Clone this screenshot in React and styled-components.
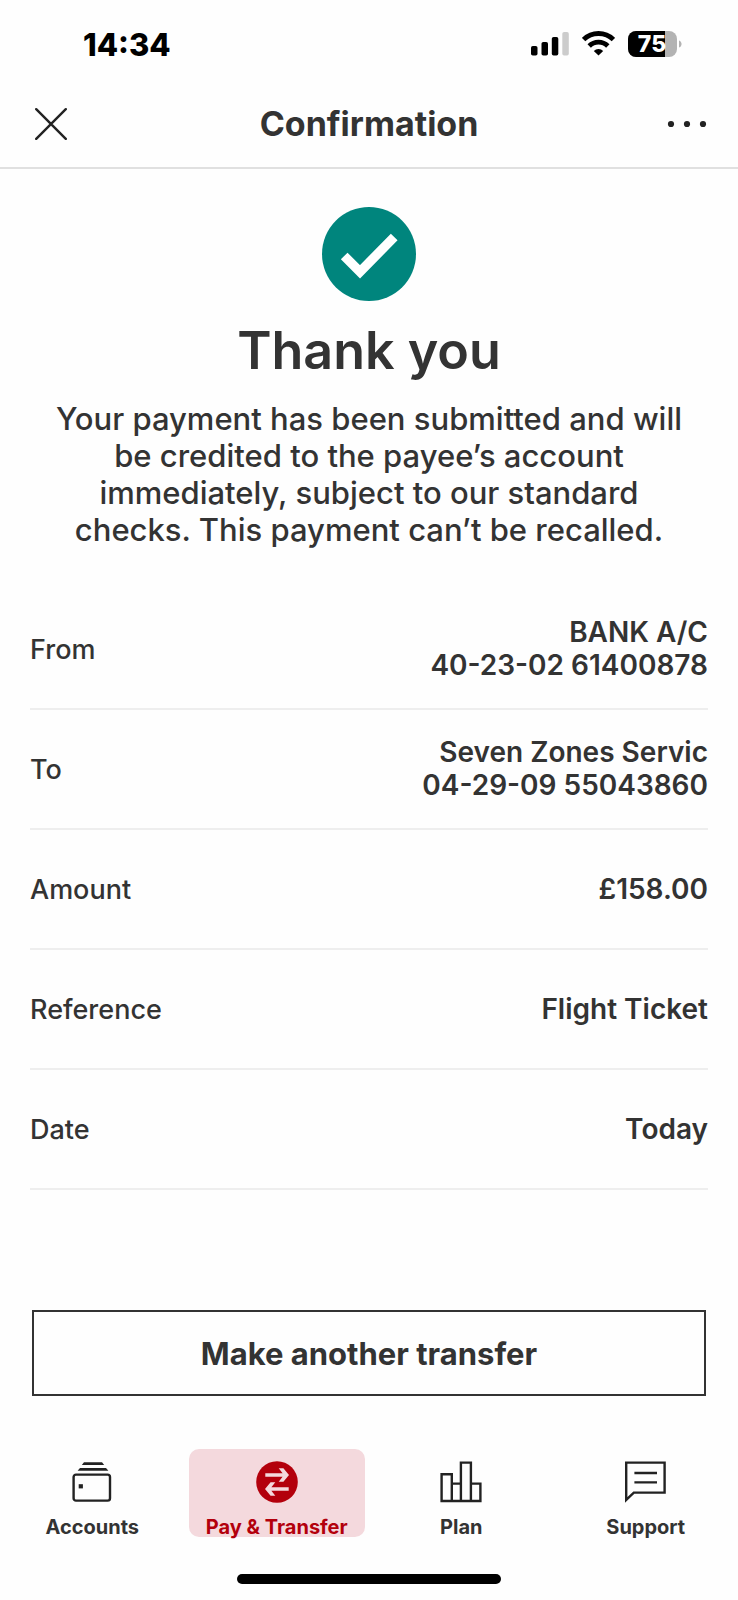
import React from "react";
import styled, { createGlobalStyle } from "styled-components";

const ink = "#333333";
const stroke = "#222222";
const red = "#b3000c";

const GlobalStyle = createGlobalStyle`
  *, *::before, *::after { box-sizing: border-box; }
  body {
    margin: 0;
    background: #fefefe;
    color: ${ink};
    font-family: Inter, "Liberation Sans", sans-serif;
  }
  button { font-family: inherit; color: inherit; }
  svg { display: block; }
`;

const Screen = styled.div`
  min-height: 100vh;
  display: flex;
  flex-direction: column;
`;

const StatusBar = styled.div`
  display: flex;
  align-items: center;
  justify-content: space-between;
  height: 88px;
  padding: 0 56px 0 83px;
  color: #000;
`;

const Clock = styled.time`
  font-size: 31px;
  line-height: 37px;
  font-weight: 800;
`;

const StatusIcons = styled.div`
  display: flex;
  align-items: center;
  gap: 13px;
`;

const Header = styled.header`
  display: grid;
  grid-template-columns: 48px 1fr 48px;
  align-items: center;
  height: 81px;
  padding: 0 27px 8px;
  border-bottom: 2px solid #e0e0e0;
`;

const IconButton = styled.button`
  display: flex;
  align-items: center;
  justify-content: center;
  width: 48px;
  height: 48px;
  padding: 0;
  border: 0;
  background: none;
`;

const HeaderTitle = styled.h1`
  margin: 0;
  font-size: 34px;
  line-height: 40px;
  font-weight: 700;
  text-align: center;
`;

const Main = styled.main`
  flex: 1;
  padding: 38px 30px 0;
`;

const Result = styled.section`
  display: flex;
  flex-direction: column;
  align-items: center;
  padding-bottom: 42px;
  text-align: center;
`;

const ResultTitle = styled.h2`
  margin: 18px 0 17px;
  font-size: 52px;
  line-height: 64px;
  font-weight: 600;
`;

const ResultText = styled.p`
  max-width: 650px;
  margin: 0;
  font-size: 31px;
  line-height: 37px;
  font-weight: 500;
`;

const Details = styled.dl`
  margin: 0;
`;

const DetailRow = styled.div`
  display: flex;
  align-items: center;
  justify-content: space-between;
  min-height: 120px;
  border-bottom: 2px solid #eeeeee;
`;

const DetailLabel = styled.dt`
  font-size: 27px;
  line-height: 33px;
  font-weight: 500;
`;

const DetailValue = styled.dd`
  display: flex;
  flex-direction: column;
  align-items: flex-end;
  margin: 0;
  font-size: 28px;
  line-height: 33px;
  font-weight: 600;
`;

const TransferButton = styled.button`
  display: block;
  width: calc(100% - 4px);
  height: 86px;
  margin: 120px 2px 52px;
  border: 2px solid ${ink};
  background: transparent;
  font-size: 31px;
  line-height: 37px;
  font-weight: 700;
`;

const TabBar = styled.nav`
  display: grid;
  grid-template-columns: repeat(4, 1fr);
`;

const Tab = styled.a`
  display: flex;
  flex-direction: column;
  align-items: center;
  gap: 14px;
  height: 88px;
  margin: 0 4px;
  padding-top: 12px;
  border-radius: 10px;
  background: ${(p) => (p.$active ? "#f4d9dd" : "transparent")};
  color: ${(p) => (p.$active ? red : ink)};
  font-size: 20px;
  line-height: 20px;
  font-weight: 700;
  text-decoration: none;
  white-space: nowrap;
`;

const HomeIndicator = styled.div`
  width: 264px;
  height: 10px;
  margin: 37px auto 16px;
  border-radius: 5px;
  background: #000;
`;

const SignalIcon = () => (
  <svg width="38" height="26" viewBox="0 0 38 26" aria-hidden="true">
    <rect x="0" y="15" width="6.5" height="9.5" rx="1.8" />
    <rect x="10.5" y="11" width="6.5" height="13.5" rx="1.8" />
    <rect x="20.8" y="6" width="6.5" height="18.5" rx="1.8" />
    <rect x="31.3" y="1" width="6.5" height="23.5" rx="1.8" fill="#cccccc" />
  </svg>
);

const WifiIcon = () => (
  <svg width="33" height="26" viewBox="0 0 33 26" fill="none" stroke="#000" strokeWidth="4.8" aria-hidden="true">
    <path d="M1.6 8.6a21.2 21.2 0 0 1 29.8 0" />
    <path d="M7.2 15a13.2 13.2 0 0 1 18.6 0" />
    <path d="M16.5 24.6l-4.7-4.7a6.7 6.7 0 0 1 9.4 0z" fill="#000" stroke="none" />
  </svg>
);

const BatteryIcon = () => (
  <svg width="54" height="28" viewBox="0 0 54 28" role="img" aria-label="Battery 75%">
    <clipPath id="battery">
      <rect x="0" y="1" width="49" height="26" rx="8" />
    </clipPath>
    <g clipPath="url(#battery)">
      <rect width="49" height="28" fill="#b3b3b3" />
      <rect width="37" height="28" />
    </g>
    <path d="M51 10.5c3.4 1 3.4 6 0 7z" fill="#b3b3b3" />
    <text x="24" y="22" fill="#fff" fontSize="23" fontWeight="800" textAnchor="middle">75</text>
  </svg>
);

const CloseIcon = () => (
  <svg width="32" height="32" viewBox="0 0 32 32" fill="none" stroke={stroke} strokeWidth="2.4" strokeLinecap="round" aria-hidden="true">
    <path d="M1.2 1.2l29.6 29.6M30.8 1.2L1.2 30.8" />
  </svg>
);

const MoreIcon = () => (
  <svg width="40" height="8" viewBox="0 0 40 8" fill={stroke} aria-hidden="true">
    <circle cx="4" cy="4" r="3.1" />
    <circle cx="20" cy="4" r="3.1" />
    <circle cx="36" cy="4" r="3.1" />
  </svg>
);

const SuccessIcon = () => (
  <svg width="94" height="94" viewBox="0 0 94 94" aria-hidden="true">
    <circle cx="47" cy="47" r="47" fill="#00857d" />
    <path d="M22.2 49L38 64.8L72.2 30" fill="none" stroke="#fff" strokeWidth="9.4" />
  </svg>
);

const AccountsIcon = () => (
  <svg width="42" height="42" viewBox="0 0 42 42" fill="none" stroke={stroke} strokeWidth="2.4" aria-hidden="true">
    <rect x="2.6" y="13.6" width="36.4" height="26" rx="2.4" />
    <path d="M6.6 9.7L9 7h26l2.4 2.7z" fill={stroke} stroke="none" />
    <path d="M10.8 4L13 1.3h18L33.2 4z" fill={stroke} stroke="none" />
    <rect x="7.7" y="23.2" width="4.2" height="4.2" fill={stroke} stroke="none" />
  </svg>
);

const TransferIcon = () => (
  <svg width="42" height="42" viewBox="0 0 42 42" aria-hidden="true">
    <circle cx="21" cy="21" r="20.8" fill={red} />
    <g fill="#f4d9dd">
      <path id="arrow" d="M9.3 12.2H26.6L22.7 7.2H27.4L33 14L27.4 20.8H22.7L26.6 15.8H9.3z" />
      <use href="#arrow" transform="rotate(180 21 21)" />
    </g>
  </svg>
);

const PlanIcon = () => (
  <svg width="42" height="42" viewBox="0 0 42 42" fill="none" stroke={stroke} strokeWidth="2.4" aria-hidden="true">
    <path d="M1.6 13.2h10.2v26.8H1.6zM20.9 1.6h10v38.4h-10zM11.8 22.6h9.1M30.9 22.6h9.5v17.4H11.8" />
  </svg>
);

const SupportIcon = () => (
  <svg width="42" height="42" viewBox="0 0 42 42" fill="none" stroke={stroke} strokeWidth="2.4" aria-hidden="true">
    <path d="M1.2 1.6h38.4v30H8.8l-7.6 7.3zM9.4 12h22.6M9.4 21.4h22.6" />
  </svg>
);

const details = [
  { label: "From", lines: ["BANK A/C", "40-23-02 61400878"] },
  { label: "To", lines: ["Seven Zones Servic", "04-29-09 55043860"] },
  { label: "Amount", lines: ["£158.00"] },
  { label: "Reference", lines: ["Flight Ticket"] },
  { label: "Date", lines: ["Today"] },
];

const tabs = [
  { label: "Accounts", Icon: AccountsIcon },
  { label: "Pay & Transfer", Icon: TransferIcon, active: true },
  { label: "Plan", Icon: PlanIcon },
  { label: "Support", Icon: SupportIcon },
];

export default function App() {
  return (
    <>
      <GlobalStyle />
      <Screen>
        <StatusBar>
          <Clock>14:34</Clock>
          <StatusIcons>
            <SignalIcon />
            <WifiIcon />
            <BatteryIcon />
          </StatusIcons>
        </StatusBar>
        <Header>
          <IconButton type="button" aria-label="Close">
            <CloseIcon />
          </IconButton>
          <HeaderTitle>Confirmation</HeaderTitle>
          <IconButton type="button" aria-label="More options">
            <MoreIcon />
          </IconButton>
        </Header>
        <Main>
          <Result>
            <SuccessIcon />
            <ResultTitle>Thank you</ResultTitle>
            <ResultText>
              Your payment has been submitted and will be credited to the payee’s account immediately, subject to our
              standard checks. This payment can’t be recalled.
            </ResultText>
          </Result>
          <Details>
            {details.map(({ label, lines }) => (
              <DetailRow key={label}>
                <DetailLabel>{label}</DetailLabel>
                <DetailValue>
                  {lines.map((line) => (
                    <span key={line}>{line}</span>
                  ))}
                </DetailValue>
              </DetailRow>
            ))}
          </Details>
          <TransferButton type="button">Make another transfer</TransferButton>
        </Main>
        <TabBar aria-label="Main">
          {tabs.map(({ label, Icon, active }) => (
            <Tab key={label} href="#" $active={active} aria-current={active ? "page" : undefined}>
              <Icon />
              {label}
            </Tab>
          ))}
        </TabBar>
        <HomeIndicator />
      </Screen>
    </>
  );
}
